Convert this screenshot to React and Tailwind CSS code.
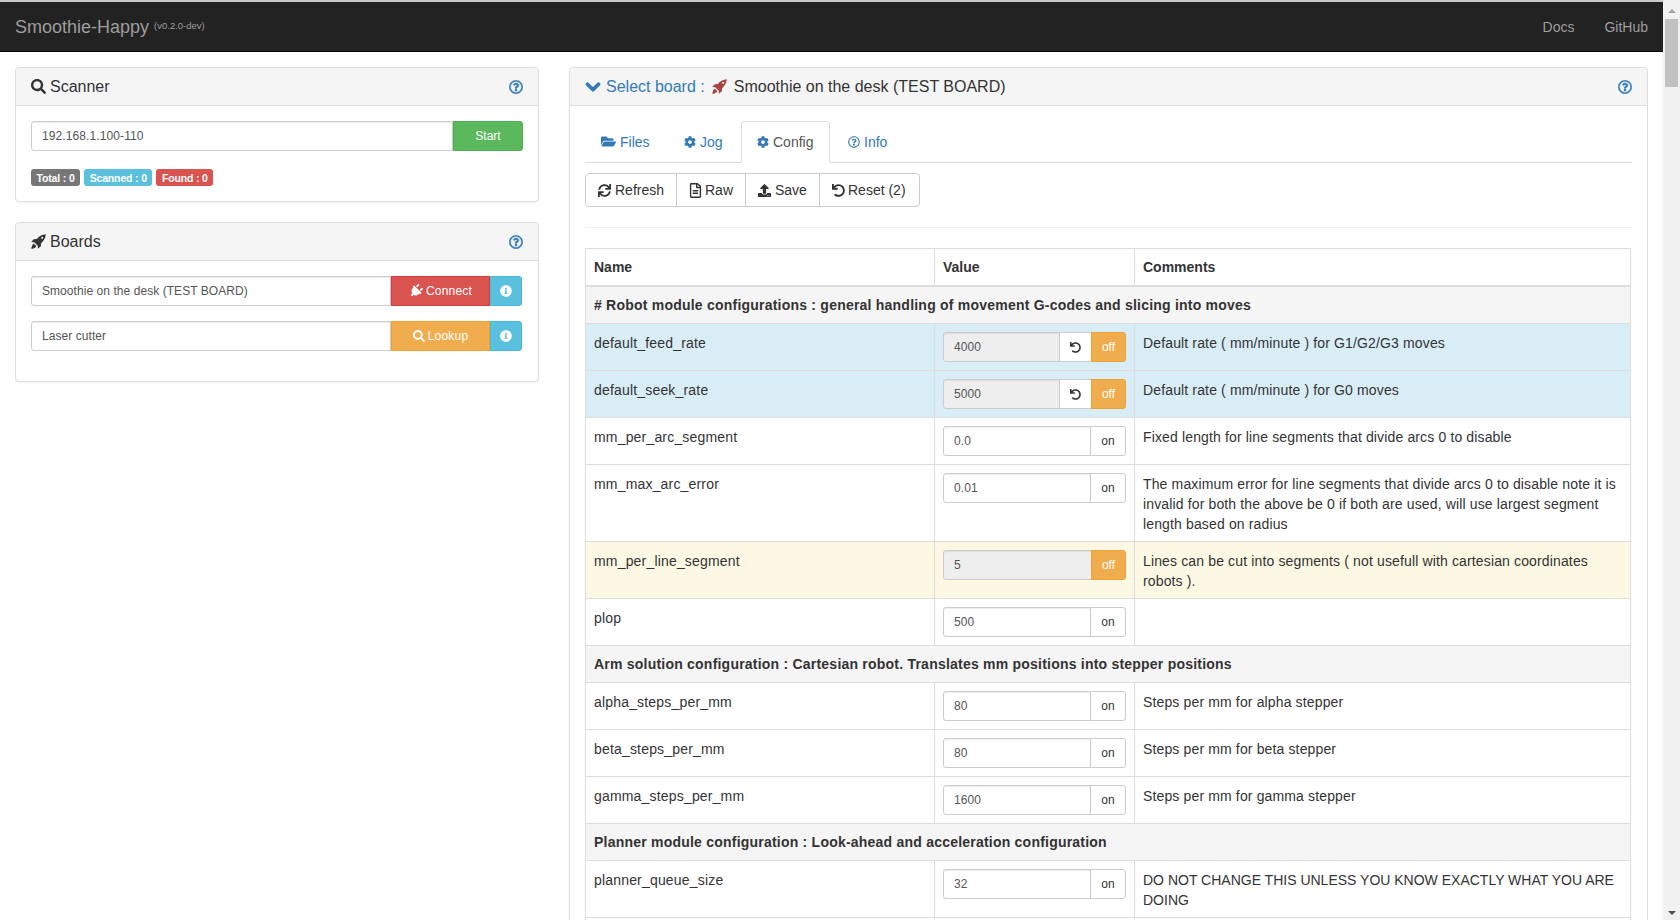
import React from 'react';
import {
  FaSearch, FaPlug, FaInfoCircle, FaChevronDown, FaFolderOpen, FaCog,
  FaRegQuestionCircle, FaSync, FaRegFileAlt, FaUpload, FaUndo,
} from 'react-icons/fa';

const rows = [
  { section: '# Robot module configurations : general handling of movement G-codes and slicing into moves' },
  { name: 'default_feed_rate', value: '4000', state: 'info', comment: 'Default rate ( mm/minute ) for G1/G2/G3 moves' },
  { name: 'default_seek_rate', value: '5000', state: 'info', comment: 'Default rate ( mm/minute ) for G0 moves' },
  { name: 'mm_per_arc_segment', value: '0.0', comment: 'Fixed length for line segments that divide arcs 0 to disable' },
  {
    name: 'mm_max_arc_error',
    value: '0.01',
    comment: 'The maximum error for line segments that divide arcs 0 to disable note it is invalid for both the above be 0 if both are used, will use largest segment length based on radius',
  },
  { name: 'mm_per_line_segment', value: '5', state: 'warning', comment: 'Lines can be cut into segments ( not usefull with cartesian coordinates robots ).' },
  { name: 'plop', value: '500', comment: '' },
  { section: 'Arm solution configuration : Cartesian robot. Translates mm positions into stepper positions' },
  { name: 'alpha_steps_per_mm', value: '80', comment: 'Steps per mm for alpha stepper' },
  { name: 'beta_steps_per_mm', value: '80', comment: 'Steps per mm for beta stepper' },
  { name: 'gamma_steps_per_mm', value: '1600', comment: 'Steps per mm for gamma stepper' },
  { section: 'Planner module configuration : Look-ahead and acceleration configuration' },
  { name: 'planner_queue_size', value: '32', caps: true, comment: 'DO NOT CHANGE THIS UNLESS YOU KNOW EXACTLY WHAT YOU ARE DOING' },
];

// font awesome 4 style rocket, the one in react-icons is too round
function Rocket({ className }) {
  return (
    <svg viewBox="0 0 16 16" fill="currentColor" className={className}>
      <path
        fillRule="evenodd"
        d="M15.8.2C12.2.4 8.8 2.2 6.2 5.2L2.9 5.5.2 8.6l3.2.2 3.8 3.8.2 3.2 3.1-2.7.3-3.3c3-2.6 4.8-6 5-9.6zM11.9 3a1.1 1.1 0 1 1 0 2.2 1.1 1.1 0 0 1 0-2.2z"
      />
      <path d="M2.9 10.2l2.9 2.9-1.2 1.2C3.5 15.2 1.6 15.6.4 15.6c0-1.2.4-3.1 1.3-4.2z" />
    </svg>
  );
}

function Panel({ title, className = '', children }) {
  return (
    <div className={`rounded border border-[#ddd] bg-white shadow-[0_1px_1px_rgba(0,0,0,0.05)] ${className}`}>
      <div className="flex h-[38px] items-center justify-between rounded-t border-b border-[#ddd] bg-[#f5f5f5] px-[15px] text-base">
        <div className="flex items-center">{title}</div>
        <FaRegQuestionCircle className="h-[14px] w-[14px] stroke-current stroke-[14px] text-[#337ab7]" />
      </div>
      {children}
    </div>
  );
}

function Label({ color, children }) {
  return (
    <span className={`flex h-[17px] items-center rounded-[3px] px-[5.5px] text-[10.5px] font-bold tracking-[-0.15px] text-white ${color}`}>
      {children}
    </span>
  );
}

function BoardRow({ name, children }) {
  return (
    <div className="mb-[15px] flex h-[30px] w-[491px]">
      <input
        readOnly
        value={name}
        className="min-w-0 flex-1 rounded-l-[3px] border border-[#ccc] px-[10px] text-xs tracking-[0.06px] text-[#555] shadow-[inset_0_1px_1px_rgba(0,0,0,0.075)] outline-none"
      />
      {children}
      <button className="flex w-[32px] items-center justify-center rounded-r-[3px] border border-[#46b8da] bg-[#5bc0de] text-xs text-white">
        <FaInfoCircle className="h-[12px] w-[12px]" />
      </button>
    </div>
  );
}

function ValueGroup({ value, state }) {
  const off = state === 'info' || state === 'warning';
  return (
    <div className="flex h-[30px] w-[183px]">
      <input
        readOnly
        value={value}
        className={`min-w-0 flex-1 rounded-l-[3px] border border-[#ccc] px-[10px] text-xs tracking-[0.1px] text-[#555] shadow-[inset_0_1px_1px_rgba(0,0,0,0.075)] outline-none ${off ? 'bg-[#eee]' : 'bg-white'}`}
      />
      {state === 'info' && (
        <button className="-ml-px flex w-[33px] items-center justify-center border border-[#ccc] bg-white text-[#333]">
          <FaUndo className="h-[11px] w-[11px]" />
        </button>
      )}
      {off ? (
        <button className="-ml-px flex w-[35px] items-center justify-center rounded-r-[3px] border border-[#eea236] bg-[#f0ad4e] text-xs text-white">
          off
        </button>
      ) : (
        <button className="-ml-px flex w-[36px] items-center justify-center rounded-r-[3px] border border-[#ccc] bg-white text-xs text-[#333]">
          on
        </button>
      )}
    </div>
  );
}

function ConfigRow({ row }) {
  if (row.section) {
    return (
      <tr className="bg-[#f5f5f5]">
        <td colSpan={3} className="border border-[#ddd] p-2 font-bold tracking-[0.22px]">{row.section}</td>
      </tr>
    );
  }
  const bg = row.state === 'info' ? 'bg-[#d9edf7]' : row.state === 'warning' ? 'bg-[#fcf8e3]' : '';
  return (
    <tr className={bg}>
      <td className="border border-[#ddd] px-2 pb-[7px] pt-[9px] align-top tracking-[0.18px]">{row.name}</td>
      <td className="border border-[#ddd] p-2 align-top"><ValueGroup value={row.value} state={row.state} /></td>
      <td className={`border border-[#ddd] px-2 pb-[7px] pt-[9px] align-top ${row.caps ? '' : 'tracking-[0.14px]'}`}>{row.comment}</td>
    </tr>
  );
}

export default function App() {
  return (
    <div className="flex h-[920px] w-[1680px] overflow-hidden bg-white font-['Liberation_Sans',Arial,sans-serif] text-sm leading-5 text-[#333]">
      <div className="flex w-[1663px] flex-col">
        <div className="h-[2px] bg-[#c8c8c8]" />
        {/* Navbar */}
        <nav className="flex h-[50px] shrink-0 items-center justify-between border-b border-[#080808] bg-[#222] text-[#9d9d9d]">
          <div className="flex items-start pl-[15px]">
            <span className="text-lg">Smoothie-Happy</span>
            <span className="ml-[5px] mt-[5px] text-[9.5px] leading-4">(v0.2.0-dev)</span>
          </div>
          <div className="flex">
            <a className="px-[15px]">Docs</a>
            <a className="px-[15px]">GitHub</a>
          </div>
        </nav>

        <div className="flex min-h-0 flex-1 gap-[30px] px-[15px] pt-[15px]">
          {/* Left column */}
          <div className="w-[524px] shrink-0">
            <Panel title={<><FaSearch className="mr-[4px] h-[15px] w-[15px]" />Scanner</>} className="mb-[20px]">
              <div className="p-[15px]">
                <div className="flex h-[30px]">
                  <input
                    readOnly
                    value="192.168.1.100-110"
                    className="min-w-0 flex-1 rounded-l-[3px] border border-[#ccc] px-[10px] text-xs tracking-[0.1px] text-[#555] shadow-[inset_0_1px_1px_rgba(0,0,0,0.075)] outline-none"
                  />
                  <button className="w-[70px] rounded-r-[3px] border border-[#4cae4c] bg-[#5cb85c] text-xs text-white">Start</button>
                </div>
                <div className="mt-[18px] flex gap-[4px]">
                  <Label color="bg-[#777]">Total : 0</Label>
                  <Label color="bg-[#5bc0de]">Scanned : 0</Label>
                  <Label color="bg-[#d9534f]">Found : 0</Label>
                </div>
              </div>
            </Panel>
            <Panel title={<><Rocket className="mr-[4px] h-[15px] w-[15px]" />Boards</>}>
              <div className="p-[15px]">
                <BoardRow name="Smoothie on the desk (TEST BOARD)">
                  <button className="flex w-[99px] items-center justify-center gap-[3px] border border-[#d43f3a] bg-[#d9534f] text-xs tracking-[0.2px] text-white">
                    <FaPlug className="h-[14px] w-[14px] rotate-45" />Connect
                  </button>
                </BoardRow>
                <BoardRow name="Laser cutter">
                  <button className="flex w-[99px] items-center justify-center gap-[3px] border border-[#eea236] bg-[#f0ad4e] text-xs tracking-[0.2px] text-white">
                    <FaSearch className="h-[12px] w-[12px]" />Lookup
                  </button>
                </BoardRow>
              </div>
            </Panel>
          </div>

          {/* Right column */}
          <div className="w-[1079px] shrink-0">
            <Panel
              title={
                <>
                  <FaChevronDown className="mr-[5px] h-[16px] w-[16px] stroke-current stroke-[40px] text-[#337ab7]" />
                  <span className="text-[#337ab7]">Select board :</span>
                  <Rocket className="ml-[7px] mr-[7px] h-[15px] w-[15px] text-[#a94442]" />
                  <span>Smoothie on the desk (TEST BOARD)</span>
                </>
              }
            >
              <div className="p-[15px]">
                {/* Tabs */}
                <div className="flex h-[42px] border-b border-[#ddd] text-[#337ab7]">
                  <a className="mr-[2px] flex w-[80px] items-center gap-[4px] pl-[16px]"><FaFolderOpen className="h-[15px] w-[15px]" />Files</a>
                  <a className="mr-[2px] flex w-[72px] items-center gap-[4px] pl-[17px]"><FaCog className="h-[12px] w-[12px]" />Jog</a>
                  <a className="mr-[2px] flex h-[42px] w-[89px] items-center gap-[4px] rounded-t border border-[#ddd] border-b-white bg-white pl-[15px] text-[#555]"><FaCog className="h-[12px] w-[12px] text-[#337ab7]" />Config</a>
                  <a className="flex items-center gap-[4px] pl-[16px]"><FaRegQuestionCircle className="h-[12px] w-[12px]" />Info</a>
                </div>

                {/* Toolbar */}
                <div className="mt-[10px] flex h-[34px]">
                  <button className="flex w-[92px] items-center gap-[4px] rounded-l border border-[#ccc] pl-[12px]"><FaSync className="h-[13px] w-[13px]" />Refresh</button>
                  <button className="-ml-px flex w-[70px] items-center gap-[3px] border border-[#ccc] pl-[12px]"><FaRegFileAlt className="h-[15px] w-[13px]" />Raw</button>
                  <button className="-ml-px flex w-[75px] items-center gap-[4px] border border-[#ccc] pl-[12px]"><FaUpload className="h-[13px] w-[13px]" />Save</button>
                  <button className="-ml-px flex w-[101px] items-center gap-[3px] rounded-r border border-[#ccc] pl-[12px]"><FaUndo className="h-[13px] w-[13px]" />Reset (2)</button>
                </div>

                <hr className="my-[20px] border-[#eee]" />

                <table className="w-[1046px] table-fixed border-collapse">
                  <colgroup>
                    <col className="w-[349px]" />
                    <col className="w-[200px]" />
                    <col />
                  </colgroup>
                  <thead>
                    <tr className="text-left">
                      <th className="border border-b-2 border-[#ddd] p-2">Name</th>
                      <th className="border border-b-2 border-[#ddd] p-2">Value</th>
                      <th className="border border-b-2 border-[#ddd] p-2">Comments</th>
                    </tr>
                  </thead>
                  <tbody>
                    {rows.map((row, i) => <ConfigRow key={i} row={row} />)}
                    <tr><td className="h-[47px] border border-[#ddd]" /><td className="border border-[#ddd]" /><td className="border border-[#ddd]" /></tr>
                  </tbody>
                </table>
              </div>
            </Panel>
          </div>
        </div>
      </div>

      {/* Page scrollbar */}
      <div className="flex w-[17px] shrink-0 flex-col items-center bg-[#f1f1f1]">
        <div className="mb-[6px] mt-[9px] h-0 w-0 border-x-[4px] border-b-[4px] border-x-transparent border-b-[#a3a3a3]" />
        <div className="h-[68px] w-[13px] bg-[#c1c1c1]" />
        <div className="mb-[5px] mt-auto h-0 w-0 border-x-[4px] border-t-[4px] border-x-transparent border-t-[#505050]" />
      </div>
    </div>
  );
}
